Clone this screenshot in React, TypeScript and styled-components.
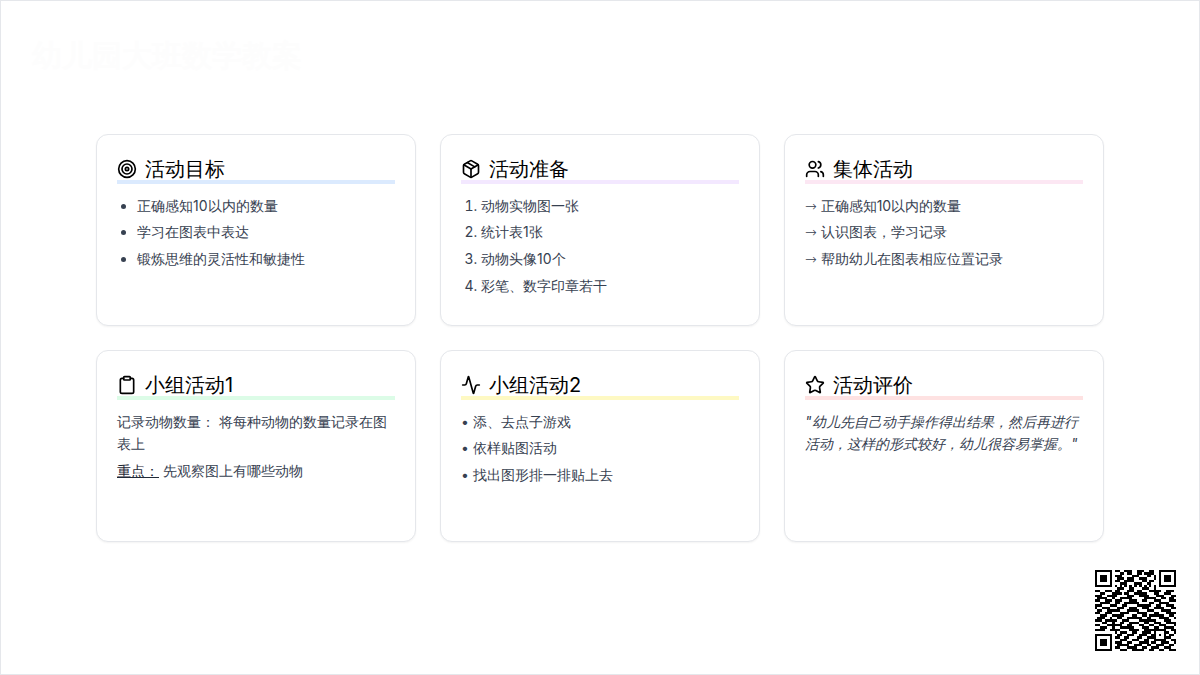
import { ReactNode } from 'react'
import styled, { createGlobalStyle } from 'styled-components'
import { Target, Package, Users, Clipboard, Activity, Star } from 'lucide-react'

const GlobalStyle = createGlobalStyle`
  html, body {
    margin: 0;
    padding: 0;
    background: #fff;
  }
  * {
    box-sizing: border-box;
  }
`

const Slide = styled.div`
  position: relative;
  width: 1200px;
  height: 675px;
  background: #fff;
  border: 1px solid #e5e7eb;
  overflow: hidden;
  font-family: Inter, sans-serif;
  color: #374151;
`

const Title = styled.h1`
  margin: 0;
  padding: 32px 31px 0;
  height: 133px;
  font-size: 30px;
  line-height: 44px;
  font-weight: 700;
  color: #fdfdfd;
`

const Grid = styled.div`
  display: grid;
  grid-template-columns: repeat(3, 320px);
  grid-auto-rows: 192px;
  gap: 24px;
  padding-left: 95px;
`

const Card = styled.div`
  background: #fff;
  border: 1px solid #e5e7eb;
  border-radius: 12px;
  padding: 20px;
  box-shadow: 0 1px 2px rgba(0, 0, 0, 0.05);
  font-size: 14px;
  line-height: 22.4px;
`

const CardHead = styled.h3<{ $tone: string }>`
  display: flex;
  align-items: center;
  gap: 8px;
  margin: 0 0 10.6px;
  height: 29px;
  padding-top: 2px;
  font-size: 20px;
  line-height: 28px;
  font-weight: 400;
  color: #000;
  border-bottom: 4px solid ${(p) => p.$tone};
`

const IconWrap = styled.span`
  display: flex;
  width: 20px;
  height: 20px;
  margin-top: 1px;
`

const BulletList = styled.ul`
  margin: 0;
  padding: 0 0 0 20px;
  list-style: disc;

  li {
    margin-bottom: 4.3px;
  }
`

const NumberList = styled.ol`
  margin: 0;
  padding: 0 0 0 20px;
  list-style: decimal;

  li {
    margin-bottom: 4.3px;
  }
`

const PlainList = styled.ul`
  margin: 0;
  padding: 0;
  list-style: none;

  li {
    margin-bottom: 4.3px;
  }
`

const Arrow = styled.span`
  font-family: 'DejaVu Sans', sans-serif;
  font-size: 14px;
  font-weight: 300;
`

const Para = styled.p`
  margin: 0 0 5px;
`

const Mark = styled.span`
  text-decoration: underline;
  color: #1f2937;
`

const Quote = styled.p`
  margin: 0;
  font-style: italic;
`

const QrBox = styled.div`
  position: absolute;
  left: 1094px;
  top: 569px;
  width: 81px;
  height: 81px;

  svg {
    display: block;
  }
`

// 33 x 33 modules, approximated from the reference
const qrRows = [
  '111111101100111001110011001111111',
  '100000100011011001101111001000001',
  '101110101110000111000110101011101',
  '101110100111011100111000101011101',
  '101110101100111100011011001011101',
  '100000100011100011100110001000001',
  '111111101010101010101010101111111',
  '000000000111001100011100100000000',
  '110011101100011101100011111001110',
  '001100011110110011111000110011100',
  '111001111000011100111100011100011',
  '011110010011111000001111100110110',
  '110011101110001110011000111000111',
  '001111001100111111000011001111000',
  '111000111001100001111110011001110',
  '100111000111001110011100111100011',
  '011001111100011111000111000111100',
  '110011100011110001111000110001111',
  '001110011111000110011011111100110',
  '011100100110011111100110001111001',
  '111011111001110000111111100011100',
  '000110010011001111001100111001111',
  '110001111110011000110011001110001',
  '001110010011111100011100110011110',
  '111100111100001111001111111110011',
  '000000001011100110011110100011001',
  '111111100110011100111001101010110',
  '100000101100110001100111100011100',
  '101110100011100111001100111110011',
  '101110101110011000111101100111001',
  '101110100111110011100110011100110',
  '100000101100011110011001110011100',
  '111111100011100111110011001100111',
]

const cards: { icon: ReactNode; title: string; tone: string; body: ReactNode }[] = [
  {
    icon: <Target size={20} strokeWidth={2} />,
    title: '活动目标',
    tone: '#dbeafe',
    body: (
      <BulletList>
        <li>正确感知10以内的数量</li>
        <li>学习在图表中表达</li>
        <li>锻炼思维的灵活性和敏捷性</li>
      </BulletList>
    ),
  },
  {
    icon: <Package size={20} strokeWidth={2} />,
    title: '活动准备',
    tone: '#f3e8ff',
    body: (
      <NumberList>
        <li>动物实物图一张</li>
        <li>统计表1张</li>
        <li>动物头像10个</li>
        <li>彩笔、数字印章若干</li>
      </NumberList>
    ),
  },
  {
    icon: <Users size={20} strokeWidth={2} />,
    title: '集体活动',
    tone: '#fce7f3',
    body: (
      <PlainList>
        <li><Arrow>→</Arrow> 正确感知10以内的数量</li>
        <li><Arrow>→</Arrow> 认识图表，学习记录</li>
        <li><Arrow>→</Arrow> 帮助幼儿在图表相应位置记录</li>
      </PlainList>
    ),
  },
  {
    icon: <Clipboard size={20} strokeWidth={2} />,
    title: '小组活动1',
    tone: '#dcfce7',
    body: (
      <>
        <Para>记录动物数量： 将每种动物的数量记录在图表上</Para>
        <Para>
          <Mark>重点：</Mark> 先观察图上有哪些动物
        </Para>
      </>
    ),
  },
  {
    icon: <Activity size={20} strokeWidth={2} />,
    title: '小组活动2',
    tone: '#fef9c3',
    body: (
      <PlainList>
        <li>• 添、去点子游戏</li>
        <li>• 依样贴图活动</li>
        <li>• 找出图形排一排贴上去</li>
      </PlainList>
    ),
  },
  {
    icon: <Star size={20} strokeWidth={2} />,
    title: '活动评价',
    tone: '#fee2e2',
    body: <Quote>"幼儿先自己动手操作得出结果，然后再进行活动，这样的形式较好，幼儿很容易掌握。"</Quote>,
  },
]

const QrCode = () => (
  <QrBox>
    <svg width="81" height="81" viewBox="0 0 33 33" shapeRendering="crispEdges">
      {qrRows.map((row, y) =>
        row.split('').map((cell, x) => (cell === '1' ? <rect key={`${x}-${y}`} x={x} y={y} width="1" height="1" /> : null))
      )}
    </svg>
  </QrBox>
)

const App = () => {
  return (
    <>
      <GlobalStyle />
      <Slide>
        <Title>幼儿园大班数学教案</Title>
        <Grid>
          {cards.map((card) => (
            <Card key={card.title}>
              <CardHead $tone={card.tone}>
                <IconWrap>{card.icon}</IconWrap>
                {card.title}
              </CardHead>
              {card.body}
            </Card>
          ))}
        </Grid>
        <QrCode />
      </Slide>
    </>
  )
}

export default App
